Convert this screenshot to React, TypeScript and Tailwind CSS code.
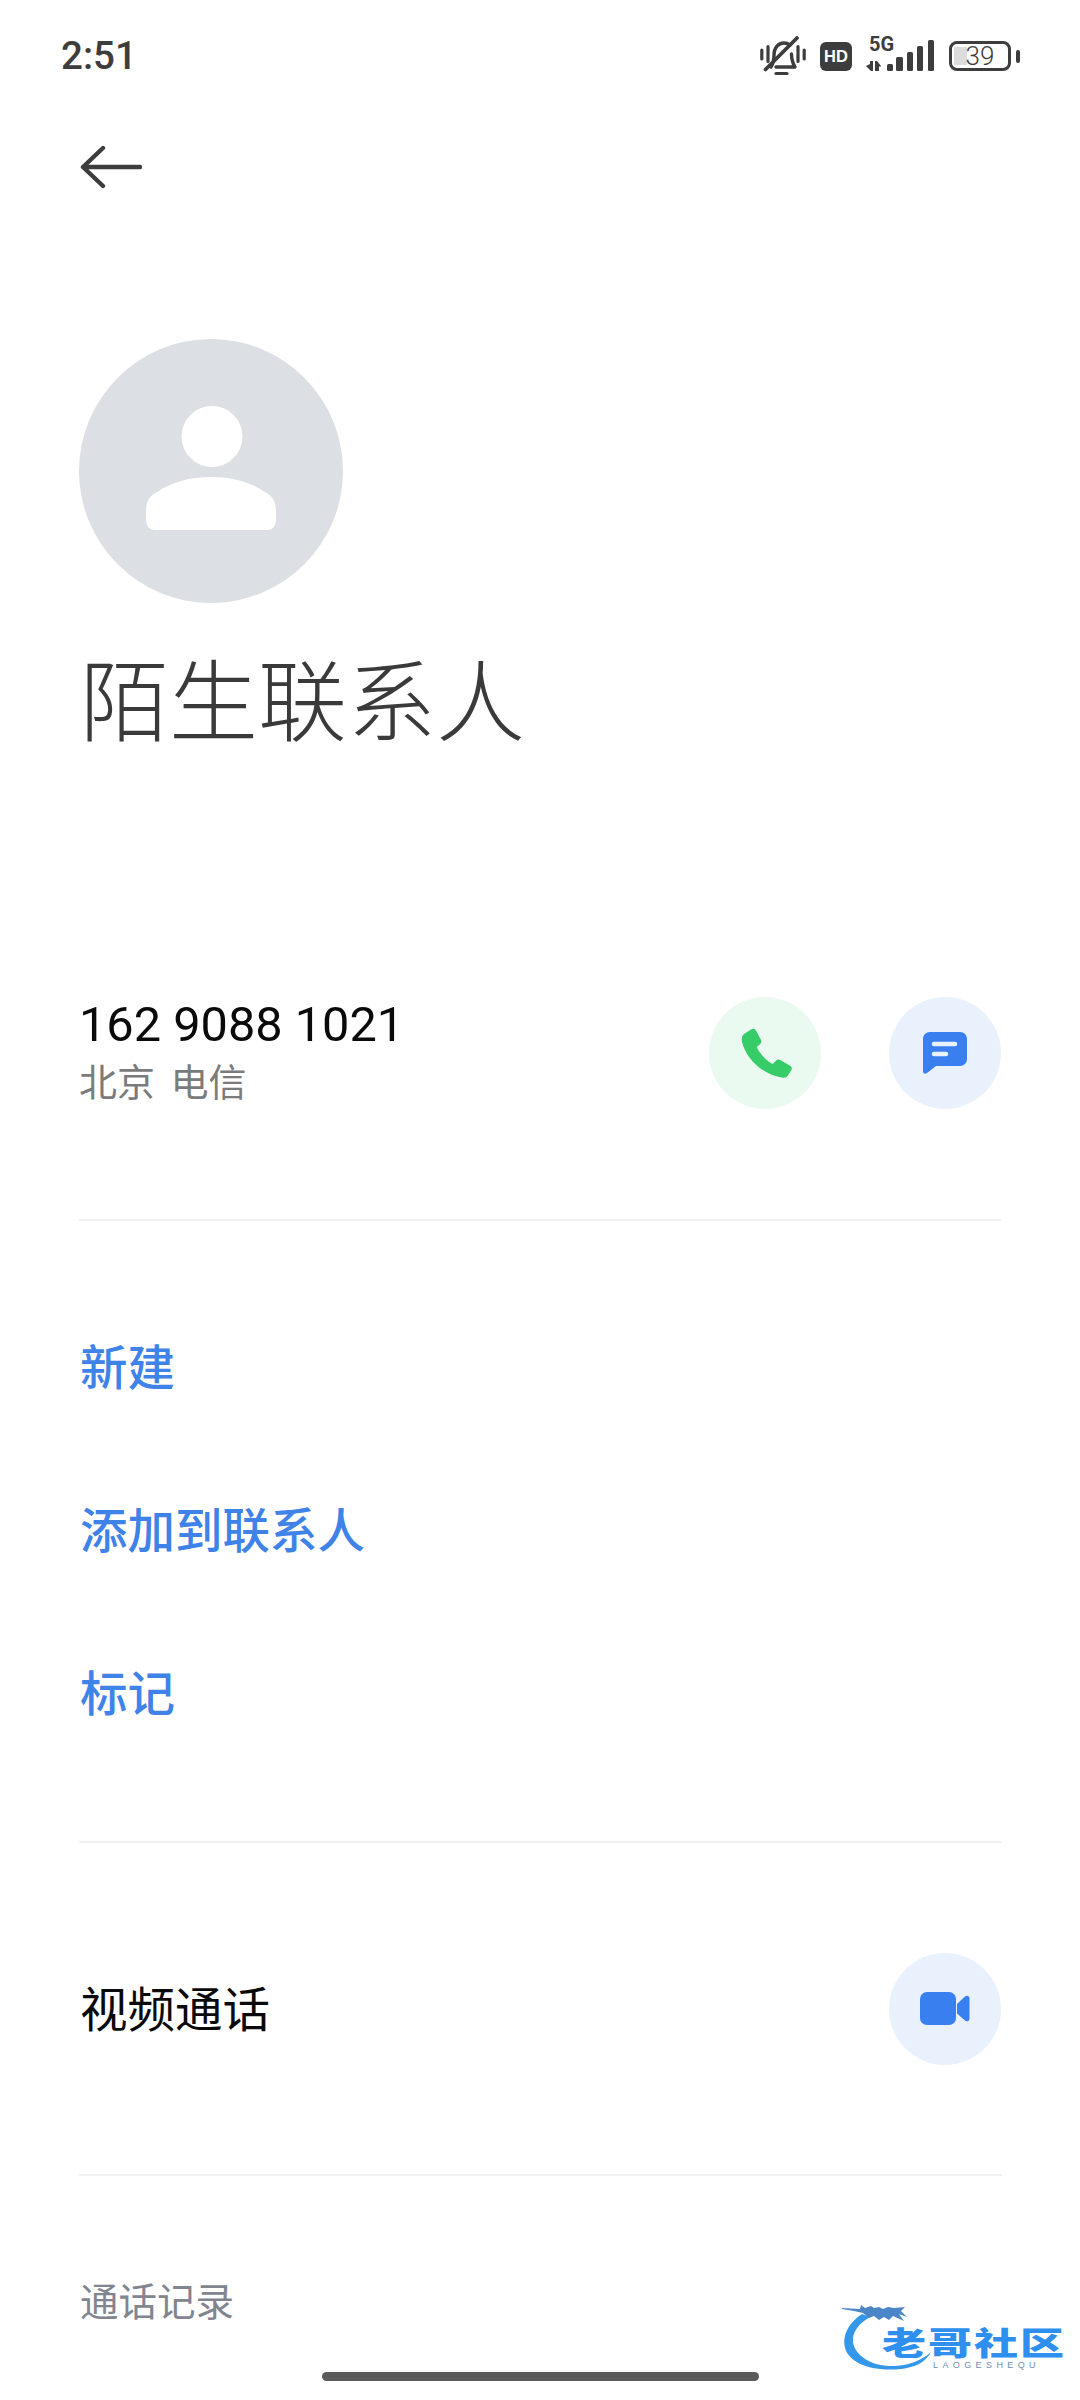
const cjk = "font-['Roboto','Noto_Sans_CJK_SC',sans-serif]";

function BellOff() {
  return (
    <svg width="46" height="40" viewBox="0 0 46 40" fill="none" stroke="#3d3d3d" strokeLinecap="round">
      <path d="M1.800 14v9M8 10.500v15M38 10.500v15M44.200 14v9" strokeWidth="3.200" />
      <path d="M11 31c2-3 3-7 3-12 0-7 4-12 10-12 2.500 0 4.500 1 6 2M31.500 18c0 5 1 9 3.500 13H16" strokeWidth="3.400" strokeLinejoin="round" />
      <path d="M5.500 33.500 37 2" strokeWidth="3.800" />
      <path d="M16 37.500h11" strokeWidth="3.200" />
    </svg>
  );
}

function Signal() {
  return (
    <svg width="68" height="32" viewBox="0 0 68 32" fill="#3d3d3d">
      <path d="M0 26l4-2v-3h3v10H5zM9 21h2l4 5-1 1-1-1v5h-4z" />
      <rect x="21" y="24" width="6" height="7" rx="1.500" />
      <rect x="30" y="17" width="7" height="14" rx="1.500" />
      <rect x="41" y="12" width="6" height="19" rx="1.500" />
      <rect x="51" y="6" width="6" height="25" rx="1.500" />
      <rect x="62" y="0" width="6" height="31" rx="1.500" />
    </svg>
  );
}

function Person() {
  return (
    <svg width="132" height="124" viewBox="0 0 132 124" fill="#ffffff">
      <circle cx="67" cy="30.500" r="30.500" />
      <path d="M1 106c0-10 3-16 11-20 15-10 33-15 54-15s39 5 54 15c8 4 11 10 11 20v7c0 7-3 11-9 11H10c-6 0-9-4-9-11z" />
    </svg>
  );
}

function Phone() {
  return (
    <svg width="52" height="52" viewBox="0 0 52 52" fill="#36cc68" className="ml-[4px]">
      <path d="M3 7 10 2.500c2-1.200 4-.8 5 1l5 9.500c.8 1.500.4 3-.8 4l-3.500 3c1 2.500 3 5.500 6 9 3.500 4 7 6.500 10 8l3.500-3.500c1.200-1.200 2.800-1.400 4.200-.5l10 6c1.500.9 1.800 2.600 1 4l-3.500 5.500c-1 1.700-3 2.500-5 2.200C20 47 5 31 1 15 .3 11.500 1 9 3 7Z" />
    </svg>
  );
}

function Message() {
  return (
    <svg width="46" height="44" viewBox="0 0 46 44" fill="none">
      <path d="M8 1h30c4 0 7 3 7 7v20c0 4-3 7-7 7H14L5 42c-2 1.500-4 .5-4-2V8c0-4 3-7 7-7Z" fill="#3a7ff0" />
      <path d="M12 13h21M12 23h12" stroke="#e9f1fd" strokeWidth="4.500" strokeLinecap="round" />
    </svg>
  );
}

function Video() {
  return (
    <svg width="50" height="34" viewBox="0 0 50 34" fill="#3a7ff0">
      <rect x="0" y="0" width="36" height="33" rx="7" />
      <path d="M37 12 45 4.500c2-1.700 4.500-.7 4.500 2v20c0 2.700-2.500 3.700-4.500 2L37 21.500Z" />
    </svg>
  );
}

function Logo() {
  return (
    <div className="absolute left-[838px] top-[2296px] h-[80px] w-[232px]">
      <svg width="100" height="80" viewBox="0 0 100 80" fill="none" className="absolute left-0 top-0">
        <path d="M24 18C10 27 4 40 7 52c4 14 24 24 56 21 14-2 24-6 30-17-10 9-22 13-36 14C34 71 17 60 15 46c-1-9 5-18 17-25Z" fill="#3497ea" />
        <path d="M4 12l18 1 1-4 4 3 6-2 3 2 5-1 4 2 5-2 6 1 11-1-4 4 6 6-8-3 5 7-11-5-4 4-5-3-5 3-5-4-5 2-6-5-9-2-12-2Z" fill="#4a86c8" />
      </svg>
      <div className="absolute left-[44px] top-[29px] flex h-[32px] w-[182px] justify-between font-['Noto_Sans_CJK_SC',sans-serif] text-[44px] leading-[32px] font-black text-[#2f8fee] scale-y-[0.72]">
        <span>老</span><span>哥</span><span>社</span><span>区</span>
      </div>
      <div className="absolute left-[95px] top-[64px] font-['Liberation_Sans',sans-serif] text-[9px] leading-[10px] tracking-[4.400px] text-[#6d8fb0]">LAOGESHEQU</div>
    </div>
  );
}

export default function App() {
  return (
    <div className={`relative h-[2400px] w-[1080px] overflow-hidden bg-white ${cjk}`}>
      <div className="flex h-[112px] items-center justify-between pl-[61px] pr-[60px]">
        <span className="text-[38.500px] leading-[44px] font-medium text-[#3d3d3d]">2:51</span>
        <div className="flex items-center">
          <BellOff />
          <div className="ml-[14px] flex h-[29px] w-[32px] items-center justify-center rounded-[6px] bg-[#3d3d3d] font-['Liberation_Sans',sans-serif] text-[16.500px] leading-none font-bold text-white">HD</div>
          <div className="relative ml-[14px] h-[32px] w-[68px]">
            <span className="absolute left-[3px] top-[-6px] font-['Roboto',sans-serif] text-[20px] leading-[20px] font-bold text-[#3d3d3d]">5G</span>
            <Signal />
          </div>
          <div className="relative ml-[15px] flex h-[30px] w-[62px] items-center justify-center rounded-[8px] border-[3px] border-[#3d3d3d]">
            <div className="absolute left-[2px] top-[3px] h-[18px] w-[13px] bg-[#dcdcdc]" />
            <span className="relative text-[26px] leading-none font-light text-[#3d3d3d]">39</span>
          </div>
          <div className="ml-[5px] h-[13px] w-[4px] rounded-full bg-[#3d3d3d]" />
        </div>
      </div>

      <div className="ml-[80px] mt-[33px] h-[44px]">
        <svg width="62" height="44" viewBox="0 0 62 44" fill="none" stroke="#3d3d3d" strokeWidth="4.400" strokeLinecap="round" strokeLinejoin="round">
          <path d="M3 22h57M23 3 3 22l20 19" />
        </svg>
      </div>

      <div className="ml-[79px] mt-[150px] flex h-[264px] w-[264px] items-center justify-center rounded-full bg-[#dcdfe4] pb-[6px]">
        <Person />
      </div>

      <h1 className="ml-[80px] mt-[51px] h-[100px] text-[89px] leading-[100px] font-light text-[#3a3a3a]">陌生联系人</h1>

      <div className="mt-[243px] flex h-[112px] items-center px-[79px]">
        <div className="flex-1">
          <div className="text-[48.700px] leading-[56px] text-[#0a0a0a]">162 9088 1021</div>
          <div className="pt-[4px] text-[38px] leading-[52px] text-[#7b7b7b] [word-spacing:6px]">北京 电信</div>
        </div>
        <div className="flex h-[112px] w-[112px] items-center justify-center rounded-full bg-[#eafaf0]">
          <Phone />
        </div>
        <div className="ml-[68px] flex h-[112px] w-[112px] items-center justify-center rounded-full bg-[#e9f1fd]">
          <Message />
        </div>
      </div>

      <div className="ml-[79px] mr-[78px] mt-[110px] h-[2px] bg-[#f1f1f1]" />

      <div className="mt-[119px] flex flex-col gap-[105px] px-[80px] text-[47.500px] leading-[58px] font-medium text-[#3f82e8]">
        <div>新建</div>
        <div>添加到联系人</div>
        <div>标记</div>
      </div>

      <div className="ml-[79px] mr-[78px] mt-[117px] h-[2px] bg-[#f1f1f1]" />

      <div className="mt-[110px] flex items-center justify-between pl-[80px] pr-[79px]">
        <div className="pt-[4px] text-[47.500px] leading-[58px] text-[#0a0a0a]">视频通话</div>
        <div className="flex h-[112px] w-[112px] items-center justify-center rounded-full bg-[#e9f1fd]">
          <Video />
        </div>
      </div>

      <div className="ml-[79px] mr-[78px] mt-[109px] h-[2px] bg-[#f1f1f1]" />

      <div className="ml-[80px] mt-[103px] text-[38.500px] leading-[48px] text-[#808590]">通话记录</div>

      <Logo />
      <div className="absolute bottom-[19px] left-[322px] h-[9px] w-[437px] rounded-full bg-[#5a5a5a]" />
    </div>
  );
}
